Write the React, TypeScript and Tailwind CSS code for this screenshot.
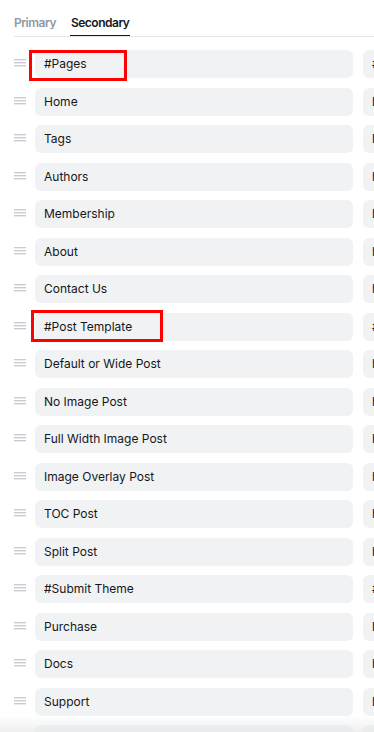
import { useState } from "react";

const items = [
  { label: "#Pages", url: "#" },
  { label: "Home", url: "https://" },
  { label: "Tags", url: "https://" },
  { label: "Authors", url: "https://" },
  { label: "Membership", url: "https://" },
  { label: "About", url: "https://" },
  { label: "Contact Us", url: "https://" },
  { label: "#Post Template", url: "#" },
  { label: "Default or Wide Post", url: "https://" },
  { label: "No Image Post", url: "https://" },
  { label: "Full Width Image Post", url: "https://" },
  { label: "Image Overlay Post", url: "https://" },
  { label: "TOC Post", url: "https://" },
  { label: "Split Post", url: "https://" },
  { label: "#Submit Theme", url: "#" },
  { label: "Purchase", url: "https://" },
  { label: "Docs", url: "https://" },
  { label: "Support", url: "https://" },
  { label: "Changelog", url: "https://" },
];

const DragHandle = () => (
  <svg width="12" height="8" viewBox="0 0 12 8" className="shrink-0 mt-[9px]">
    <rect x="0" y="0" width="12" height="1.4" fill="#c9cdd3" />
    <rect x="0" y="3" width="12" height="1.4" fill="#c9cdd3" />
    <rect x="0" y="6" width="12" height="1.4" fill="#c9cdd3" />
  </svg>
);

const App = () => {
  const [tab, setTab] = useState("secondary");

  return (
    <div className="relative w-[374px] h-[732px] overflow-hidden bg-white" style={{ fontFamily: "Inter, 'Noto Sans', sans-serif" }}>
      <div className="pl-[14px] pt-[14px]">
        <div className="flex flex-row items-end border-b border-[#e3e5e8] h-[23px]">
          <div onClick={() => setTab("primary")} className={`h-full pr-[14px] text-[12px] font-semibold tracking-[-0.5px] cursor-pointer ${tab === "primary" ? "text-[#15171a]" : "text-[#8e98a6]"}`}>
            Primary
          </div>
          <div onClick={() => setTab("secondary")} className="h-full flex flex-col cursor-pointer">
            <p className={`text-[12px] font-semibold tracking-[-0.5px] px-[1px] ${tab === "secondary" ? "text-[#15171a]" : "text-[#8e98a6]"}`}>Secondary</p>
            <div className={`h-[1.5px] mt-[3px] ${tab === "secondary" ? "bg-[#15171a]" : "bg-transparent"}`} />
          </div>
        </div>

        <div className="flex flex-col gap-[9.5px] pt-[13px]">
          {items.map((item) => (
            <div key={item.label} className="flex flex-row items-start">
              <DragHandle />
              <div className="ml-[9px] w-[318px] h-[28px] shrink-0 rounded-[6px] bg-[#f1f2f4] flex items-center px-[9px] text-[12px] text-[#15171a]">
                {item.label}
              </div>
              <div className="ml-[10px] w-[200px] h-[28px] shrink-0 rounded-[6px] bg-[#f1f2f4] flex items-center px-[9px] text-[12px] text-[#15171a]">
                {item.url}
              </div>
            </div>
          ))}
        </div>
      </div>

      {/* annotation boxes */}
      <div className="absolute left-[29px] top-[49.5px] w-[98px] h-[31px] border-[3px] border-[#ff0000]" />
      <div className="absolute left-[31px] top-[310px] w-[132px] h-[32px] border-[3px] border-[#ff0000]" />

      {/* bottom fade */}
      <div className="absolute left-0 right-0 bottom-0 h-[16px] bg-gradient-to-b from-transparent to-[#e6e7e9]/70" />
    </div>
  );
};

export default App;
